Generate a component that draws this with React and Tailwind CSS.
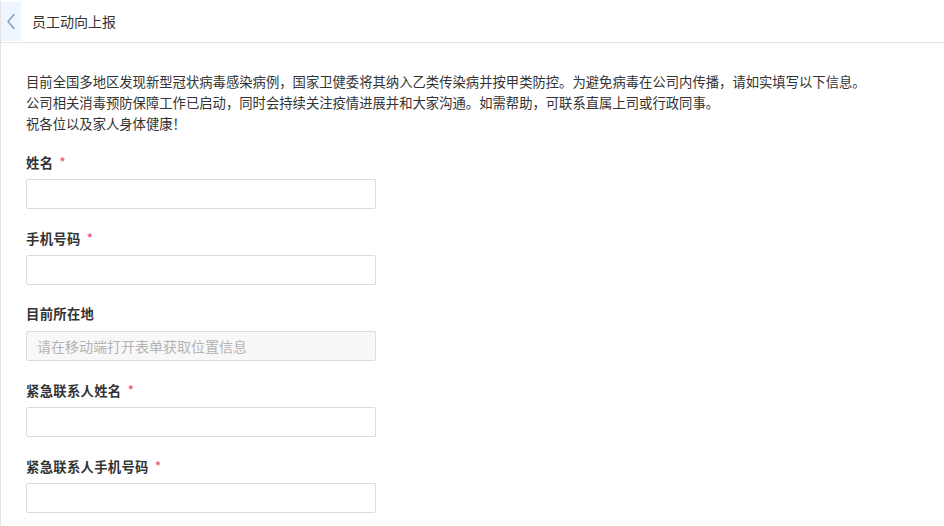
import React from "react";

const font = { fontFamily: '"Microsoft YaHei", "Noto Sans CJK SC", "Noto Sans", sans-serif' };

function Field({ label, required, disabled, placeholder }) {
  return (
    <div className="mb-[18px]">
      <div className="h-[22px] leading-[22px] text-[13.33px] font-bold text-[#333] tracking-[0.3px]">
        {label}
        {required && <span className="ml-[6px] text-[14px] text-[#ec4a6a] font-normal">*</span>}
      </div>
      <input
        disabled={disabled}
        placeholder={placeholder}
        className={
          "mt-[6px] block w-[350px] h-[30px] rounded-[2px] border border-[#dcdcdc] px-[10px] text-[14px] text-[#333] outline-none placeholder:text-[#b3b3b3] " +
          (disabled ? "bg-[#f8f8f8]" : "bg-white")
        }
      />
    </div>
  );
}

export default function App() {
  return (
    <div
      className="w-[944px] h-[526px] overflow-hidden bg-white border-l border-[#e3e3e3] text-[#333]"
      style={font}
    >
      <header className="h-[43px] pt-[2px] pb-[1px] border-b border-[#e4e4e4] flex items-stretch">
        <button className="w-[20px] bg-[#eef5fe] flex items-center justify-center">
          <svg width="10" height="17" viewBox="0 0 10 17" fill="none">
            <path d="M8 1.5 L2 8.5 L8 15.5" stroke="#7f9cc8" strokeWidth="1.4" strokeLinecap="round" strokeLinejoin="round" />
          </svg>
        </button>
        <div className="ml-[11px] flex items-center text-[14px] text-[#333]">员工动向上报</div>
      </header>
      <main className="pl-[25px] pt-[28px]">
        <div className="text-[13.33px] leading-[21px] text-[#333] mb-[17px]">
          <p>目前全国多地区发现新型冠状病毒感染病例，国家卫健委将其纳入乙类传染病并按甲类防控。为避免病毒在公司内传播，请如实填写以下信息。</p>
          <p>公司相关消毒预防保障工作已启动，同时会持续关注疫情进展并和大家沟通。如需帮助，可联系直属上司或行政同事。</p>
          <p>祝各位以及家人身体健康！</p>
        </div>
        <Field label="姓名" required />
        <Field label="手机号码" required />
        <Field label="目前所在地" disabled placeholder="请在移动端打开表单获取位置信息" />
        <Field label="紧急联系人姓名" required />
        <Field label="紧急联系人手机号码" required />
      </main>
    </div>
  );
}
